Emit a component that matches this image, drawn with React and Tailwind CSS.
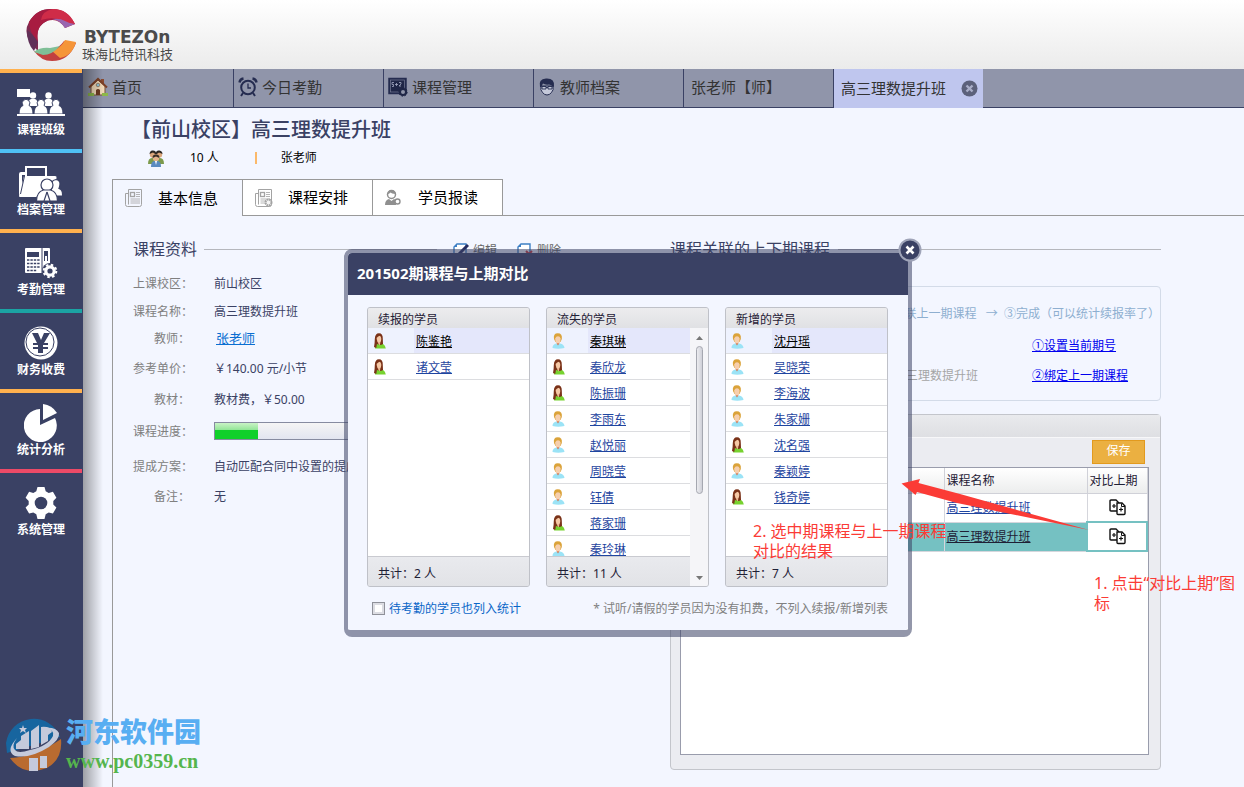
import clsx from 'clsx'

function ClassIcon() {
  return (
    <svg width="48" height="28" viewBox="0 0 48 28" fill="#fff">
      <rect x="0" y="0" width="13" height="8" />
      <circle cx="16" cy="6.5" r="3.2" />
      <path d="M11 17q0-6 3-7h4q3 1 3 7z" />
      <circle cx="31.500" cy="6.500" r="3.200" />
      <path d="M26.500 17q0-6 3-7h4q3 1 3 7z" />
      <g stroke="#3a4164" strokeWidth="1">
        <path d="M2 25q0-7 4-8.500a3.800 3.800 0 1 1 6 0q4 1.500 4 8.500z" />
        <path d="M17 25q0-7 4-8.500a3.800 3.800 0 1 1 6 0q4 1.500 4 8.500z" />
        <path d="M32 25q0-7 4-8.500a3.800 3.800 0 1 1 6 0q4 1.500 4 8.500z" />
      </g>
      <rect x="0" y="25" width="48" height="2" />
    </svg>
  )
}

function FilesIcon() {
  return (
    <svg width="44" height="36" viewBox="0 0 44 36" fill="#fff">
      <path d="M7 13V2h20v10" fill="none" stroke="#fff" strokeWidth="2" />
      <path d="M0 31V9q0-2 2-2h4v3H3v13z" />
      <path d="M5 11h31q2 0 1.500 2L34 32H1q-1 0-1-1z" />
      <path d="M1.500 29L5.500 11" stroke="#3a4164" strokeWidth="1" />
      <g stroke="#3a4164" strokeWidth="1.200">
        <path d="M32 24q-1-9 5-9.500q6 .5 3 9q4 1 3.500 7.500H34z" />
        <circle cx="28" cy="20" r="6" />
        <path d="M17.500 36q0-9 7-11h7q7 2 7 11z" />
        <path d="M28 27l-3 9M28 27l3 9" />
      </g>
    </svg>
  )
}

function DeviceIcon() {
  return (
    <svg width="34" height="32" viewBox="0 0 34 32">
      <rect x="1" y="1" width="25" height="25" rx="1" fill="#fff" />
      <path d="M3 5h12v5H3z" fill="#3a4164" />
      <path d="M3 13h13M3 16.500h13M3 20h13M3 23.500h10" stroke="#3a4164" strokeWidth="1.600" strokeDasharray="2.400 1" />
      <path d="M18 1v25" stroke="#3a4164" />
      <path d="M20 4h4v10h-4z" fill="#3a4164" />
      <path d="M21 9h2v6h-2z" fill="#fff" />
      <circle cx="26" cy="24" r="8" fill="#3a4164" />
      <circle cx="26" cy="24" r="4.200" fill="none" stroke="#fff" strokeWidth="3.200" />
      <circle cx="26" cy="24" r="6.300" fill="none" stroke="#fff" strokeWidth="2" strokeDasharray="2.500 2.450" />
    </svg>
  )
}

function MoneyIcon() {
  return (
    <svg width="36" height="36" viewBox="0 0 36 36">
      <circle cx="18" cy="18" r="16.500" fill="#fff" />
      <circle cx="17" cy="17" r="14" fill="none" stroke="#3a4164" />
      <path d="M9 8h6l3 7 3-7h6l-6 10h4v2h-5v2h5v2h-5v4h-5v-4h-5v-2h5v-2h-5v-2h4z" fill="#3a4164" />
    </svg>
  )
}

function PieIcon() {
  return (
    <svg width="34" height="38" viewBox="0 0 34 38" fill="#fff">
      <path d="M16 5v16l15-7a16.500 16.500 0 1 1-15-9z" />
      <path d="M19 0q9 1 14 9L19 16z" />
    </svg>
  )
}

function CogIcon() {
  return (
    <svg width="32" height="34" viewBox="0 0 32 34">
      <path
        d="M12.500 1h7l1.200 4.200 3 1.700 4.200-1.100 3.500 6-3.100 3.100v3.600l3.100 3.100-3.500 6-4.200-1.100-3 1.700L19.500 33h-7l-1.200-4.800-3-1.700-4.200 1.100-3.500-6 3.100-3.100v-3.600L.600 11.800l3.500-6 4.200 1.100 3-1.700z"
        fill="#fff"
      />
      <circle cx="16" cy="17" r="6.300" fill="#3a4164" />
    </svg>
  )
}

function HouseIcon() {
  return (
    <svg width="20" height="20" viewBox="0 0 20 20">
      <path d="M13 2h3v5h-3z" fill="#8a4a2f" />
      <path d="M3 9l7-6 7 6v9H3z" fill="#f0d9b8" stroke="#7a5236" />
      <path d="M1 10.500L10 2l9 8.500" fill="none" stroke="#7b4128" strokeWidth="2" />
      <circle cx="10" cy="8" r="1.800" fill="#8fc3d6" stroke="#7a5236" strokeWidth=".6" />
      <path d="M8 18v-5q2-2 4 0v5z" fill="#6d3a22" />
      <path d="M0 16h6v3H0zM14 16h6v3h-6z" fill="#8cb84a" />
    </svg>
  )
}

function ClockIcon() {
  return (
    <svg width="20" height="20" viewBox="0 0 20 20" fill="none" stroke="#252c50" strokeWidth="1.600">
      <circle cx="10" cy="10.500" r="6.800" strokeWidth="2" />
      <path d="M10 6.500v4.500h3" strokeWidth="1.300" />
      <path d="M1.500 5.500Q2 2 5.500 1.500M14.500 1.500Q18 2 18.500 5.500" strokeWidth="2.400" />
      <path d="M5 16l-2 3M15 16l2 3" strokeWidth="2" />
    </svg>
  )
}

function BoardIcon() {
  return (
    <svg width="20" height="20" viewBox="0 0 20 20">
      <rect x="1" y="1.500" width="17" height="15" fill="#1f2647" stroke="#252c50" strokeWidth="1.500" />
      <rect x="2.500" y="3" width="14" height="12" fill="none" stroke="#777d98" strokeWidth=".7" />
      <path d="M6 5.500H4v2h1.500v2H4M7 7.500h3M8.500 6v3M11 5.500h2v1.500l-2 2h2" stroke="#a5abc4" strokeWidth=".8" fill="none" />
      <circle cx="15" cy="15" r="3" fill="#9095aa" stroke="#1f2647" strokeWidth="2" />
      <circle cx="15" cy="15" r="4.200" fill="none" stroke="#1f2647" strokeDasharray="1.600 1.600" />
    </svg>
  )
}

function TeacherIcon() {
  return (
    <svg width="18" height="18" viewBox="-1 0 18 18">
      <path d="M2 8q-1 4 1.500 6.500 2 2.500 4.500 2.500t4.500-2.500Q15 12 14 8z" fill="#c5c9da" stroke="#252c50" />
      <path d="M1 9Q-1 1 7 .5q9-.5 8 8L13.800 9Q13 6.500 10 6.500 6 7 4 5.500 3 7 2.300 9z" fill="#252c50" />
      <path d="M3 8.500h4v2.500H3zM9 8.500h4v2.500H9zM7 9.500h2" fill="none" stroke="#252c50" strokeWidth=".9" />
    </svg>
  )
}

function GroupIcon() {
  return (
    <svg width="16" height="17" viewBox="0 0 16 17">
      <path d="M0 14q0-6 4-6h8q4 0 4 6z" fill="#7c9a4c" />
      <circle cx="5" cy="4.500" r="3.200" fill="#dca77c" />
      <circle cx="11" cy="4.500" r="3.200" fill="#dca77c" />
      <path d="M1.500 4Q2 0 5 .500q3 0 3 2.500 0-3 3.500-2.500Q14.500 1 14.500 4L11 2.500 8 4.500 5 2.500z" fill="#2c2723" />
      <circle cx="8" cy="8" r="3.200" fill="#e5b48c" />
      <path d="M4.700 8Q4 4.500 8 4.500T11.300 8L8 6.500z" fill="#3a2f28" />
      <path d="M3 17q0-6 3.500-6h3Q13 11 13 17z" fill="#5b8bc0" />
      <path d="M7 11h2l-1 4z" fill="#fff" />
    </svg>
  )
}

function NewsIcon({ gear }) {
  return (
    <svg width="18" height="18" viewBox="0 0 18 18" fill="none" stroke="#a3a3a3">
      <path d="M3.500.500h13v15q0 2-2 2h-12q-2 0-2-2v-11h3" />
      <path d="M3.500.500v15" />
      <rect x="5.500" y="3.500" width="4" height="4" strokeWidth="1.300" />
      <path d="M11 3.500h4M11 5.500h4M11 7.500h4M5.500 10h9.500M5.500 12h9.500M5.500 14h9.500" strokeWidth=".8" />
      {gear && <circle cx="13.500" cy="13.500" r="3" fill="#f5f5f5" strokeWidth="2" strokeDasharray="1.800 .6" />}
    </svg>
  )
}

function PersonIcon() {
  return (
    <svg width="16" height="17" viewBox="0 0 16 17">
      <circle cx="6.500" cy="5.500" r="4" fill="#fff" stroke="#8f8f8f" strokeWidth="1.500" />
      <path d="M2.500 5Q4 .5 7 1q4 .5 3.500 4-4-.5-5-1.500Q4 5 2.500 5z" fill="#8f8f8f" />
      <path d="M0 16q0-5 4-6l2.500 2L9 10q2 .5 2 6z" fill="#8f8f8f" />
      <circle cx="12.500" cy="12.500" r="2.500" fill="#fff" stroke="#8f8f8f" strokeWidth="1.400" />
    </svg>
  )
}

function BoyIcon() {
  return (
    <svg width="13" height="16" viewBox="0 0 13 16">
      <path d="M.5 15Q.5 11 4.500 10.500h3.500q4 .5 4.500 4.500Q6 16.500 .5 15z" fill="#9be3f6" />
      <path d="M4.300 9.500h3.400L6 12.500z" fill="#d9683f" />
      <path d="M2 6Q1 .2 5.800.2T9.800 6L8.500 9h-5z" fill="#dba33a" />
      <path d="M3.200 5.500Q4 3.200 6 3.200T8.600 5.500Q8.700 10.500 6 10.500T3.200 5.500z" fill="#f6cfae" />
    </svg>
  )
}

function GirlIcon() {
  return (
    <svg width="13" height="16" viewBox="0 0 13 16">
      <path d="M2 15.500Q2.500 11 5 10.500h4q3 1 3.800 5z" fill="#77d22f" />
      <path d="M1 14Q1.800 10 1.800 6 2 .3 6 .3T9.800 6l.2 5-2 1-4-1-.8 4z" fill="#7a3218" />
      <path d="M3.600 5Q5 3 7 2.800 8.300 4 8.300 6 8 10 6 10T3.600 5z" fill="#f6c9a6" />
      <path d="M4.800 9.500h2.700l-1 3z" fill="#f1bb93" />
    </svg>
  )
}

function CompareIcon() {
  return (
    <svg width="17" height="17" viewBox="0 0 17 17" fill="#fff" stroke="#111" strokeWidth="1.400">
      <path d="M2 1h5l2.500 2.500V12H2q-1 0-1-1V2q0-1 1-1z" />
      <path d="M8 4h5l3 3v7.500q0 1-1 1H9q-1 0-1-1z" />
      <path d="M12.500 4.500v3H16" fill="none" strokeWidth="1" />
      <path d="M3 7h4M5 5v4M10 10.500h4M12 8.500v4" strokeWidth="1.200" />
    </svg>
  )
}

function DocIcon({ remove }) {
  return (
    <svg width="16" height="16" viewBox="0 0 16 16" fill="none">
      <path d="M4 1h9v13H1V4z" fill="#fff" stroke="#3d7fc4" strokeWidth="1.400" />
      <path d="M1 4h3V1z" fill="#3d7fc4" />
      {remove ? (
        <path d="M9 8l6 6M15 8l-6 6" stroke="#c33" strokeWidth="2" />
      ) : (
        <path d="M15 2L6 11" stroke="#252c60" strokeWidth="3" />
      )}
    </svg>
  )
}

const menu = [
  { label: '课程班级', icon: ClassIcon, line: 'border-[#ffb14e]' },
  { label: '档案管理', icon: FilesIcon, line: 'border-[#4fc1f5]' },
  { label: '考勤管理', icon: DeviceIcon, line: 'border-[#ffb14e]' },
  { label: '财务收费', icon: MoneyIcon, line: 'border-[#1ba3a3]' },
  { label: '统计分析', icon: PieIcon, line: 'border-[#ffb14e]' },
  { label: '系统管理', icon: CogIcon, line: 'border-[#ec4a67]' },
]

const navTabs = [
  { label: '首页', icon: HouseIcon },
  { label: '今日考勤', icon: ClockIcon },
  { label: '课程管理', icon: BoardIcon },
  { label: '教师档案', icon: TeacherIcon },
  { label: '张老师【师】' },
]

const groups = [
  {
    title: '续报的学员',
    total: '2',
    students: [
      { name: '陈鉴艳', girl: true },
      { name: '诸文莹', girl: true },
    ],
  },
  {
    title: '流失的学员',
    total: '11',
    scroll: true,
    students: [
      { name: '秦琪琳' },
      { name: '秦欣龙', girl: true },
      { name: '陈振珊', girl: true },
      { name: '李雨东' },
      { name: '赵悦丽' },
      { name: '周晓莹' },
      { name: '钰倩' },
      { name: '蒋家珊', girl: true },
      { name: '秦玲琳' },
    ],
  },
  {
    title: '新增的学员',
    total: '7',
    students: [
      { name: '沈丹瑶' },
      { name: '吴晓荣' },
      { name: '李海波' },
      { name: '朱家姗' },
      { name: '沈名强', girl: true },
      { name: '秦颖婷' },
      { name: '钱奇婷', girl: true },
    ],
  },
]

function Header() {
  return (
    <header className="flex h-[69px] items-start bg-gradient-to-b from-white to-[#ebebeb] pl-[25px] pt-2">
      <svg width="52" height="54" viewBox="0 0 52 54">
        <path d="M13 43Q-4 28 4 14 12 0 28 1L22 13Q10 18 13 34z" fill="#7e2a50" />
        <path d="M4 14Q12 0 28 1q14 0 22 15L40 20Q33 9 22 13 10 18 13 34 4 24 4 14z" fill="#a81c41" />
        <path d="M28 1q15 0 22 15l-8 1Q34 7 16 12 17 3 28 1z" fill="#cf2c48" />
        <path d="M27 11q8-1 13 2 5 3 10 3l-10 4Q35 12 27 11z" fill="#9866b0" />
        <path d="M2 22Q2 36 9 43l4-9Q7 25 2 22z" fill="#5f3057" />
        <path d="M9 43q11 2 18-1 7-2 12-9l12 2Q44 53 27 53 16 53 9 43z" fill="#c2403f" />
        <path d="M27 43q9-3 13-11l11 2Q47 48 35 50z" fill="#f59538" />
        <path d="M9 44q6-5 16-4l10-2q-8 9-17 9z" fill="#7fbf96" />
      </svg>
      <div className="ml-[5px] mt-[20px] text-[#4b4b4b]">
        <div className="px-[2px] font-['DejaVu_Sans'] text-[17px] leading-[18px] font-bold">BYTEZOn</div>
        <div className="text-[13px] leading-4">珠海比特讯科技</div>
      </div>
    </header>
  )
}

function Sidebar() {
  return (
    <aside className="relative w-[83px] shrink-0 bg-[#3a4164]">
      <nav className="pr-[2px]">
        {menu.map(({ label, icon: Icon, line }) => (
          <a key={label} href="#" className={clsx('-mr-px flex h-20 flex-col items-center border-t-4 pt-3', line)}>
            <span className="flex h-9 items-center justify-center">
              <Icon />
            </span>
            <span className="text-xs leading-[18px] font-bold text-white">{label}</span>
          </a>
        ))}
      </nav>
      <div className="absolute inset-y-0 left-full w-5 bg-gradient-to-r from-black/35 to-transparent" />
    </aside>
  )
}

function NavTabs() {
  return (
    <nav className="flex h-[39px] border-b border-[#3a4164] bg-[#9095aa] text-[15px] text-[#333]">
      {navTabs.map(({ label, icon: Icon }) => (
        <a
          key={label}
          href="#"
          className={clsx('-mr-px flex w-[151px] items-center gap-1 border-r border-[#3a4164] pr-1 pb-[2px]', Icon ? 'pl-[5px]' : 'pl-2')}
        >
          {Icon && <Icon />}
          <span>{label}</span>
        </a>
      ))}
      <div className="-mb-px flex w-[150px] items-center justify-between border-l border-[#3a4164] bg-[#bfc6ee] pr-[5px] pl-[7px]">
        <span>高三理数提升班</span>
        <button aria-label="关闭标签" className="rounded-full">
          <svg width="17" height="17" viewBox="0 0 17 17">
            <circle cx="8.500" cy="8.500" r="8" fill="#5c617b" />
            <path d="M5.500 5.500l6 6M11.500 5.500l-6 6" stroke="#a9aec8" strokeWidth="2.400" />
          </svg>
        </button>
      </div>
    </nav>
  )
}

function InfoRow({ label, height, children }) {
  return (
    <div className={clsx('flex items-center', height)}>
      <dt className="w-[57px] text-right whitespace-nowrap text-[#808080]">{label}：</dt>
      <dd className="ml-6 whitespace-nowrap">{children}</dd>
    </div>
  )
}

function CourseInfo() {
  return (
    <section className="pl-5">
      <div className="flex h-5 items-center">
        <h2 className="text-base text-[#3a4164]">课程资料</h2>
        <div className="ml-[7px] w-[233px] border-t border-[#b5b7bd]" />
        <a href="#" className="ml-4 flex items-center gap-1 pt-1 text-xs text-[#666]">
          <DocIcon />
          编辑
        </a>
        <a href="#" className="ml-5 flex items-center gap-1 pt-1 text-xs text-[#666]">
          <DocIcon remove />
          删除
        </a>
      </div>
      <dl className="mt-[11px] text-xs text-[#3a4164]">
        <InfoRow label="上课校区" height="h-7">前山校区</InfoRow>
        <InfoRow label="课程名称" height="h-[27px]">高三理数提升班</InfoRow>
        <InfoRow label="教师" height="h-7">
          <a href="#" className="ml-[2px] text-[13px] text-[#0a6ed1] underline">张老师</a>
        </InfoRow>
        <InfoRow label="参考单价" height="h-8">￥140.00 元/小节</InfoRow>
        <InfoRow label="教材" height="h-[30px]">教材费，￥50.00</InfoRow>
        <InfoRow label="课程进度" height="h-[34px]">
          <div className="mb-[2px] h-[18px] w-[150px] border border-[#868ba0] bg-gradient-to-b from-[#f5f5f5] to-[#e2e5f0]">
            <div className="h-full w-[29%] bg-linear-to-b from-[#c9f3c6] from-0% via-[#8fe595] via-45% to-[#10d02a] to-46%" />
          </div>
        </InfoRow>
        <InfoRow label="提成方案" height="h-9">自动匹配合同中设置的提成方案</InfoRow>
        <InfoRow label="备注" height="h-6">无</InfoRow>
      </dl>
    </section>
  )
}

function LinkedCourses() {
  return (
    <section className="text-xs">
      <div className="flex h-5 items-center">
        <h2 className="text-base text-[#3a4164]">课程关联的上下期课程</h2>
        <div className="ml-2 flex-1 border-t border-[#b5b7bd]" />
      </div>

      <div className="mt-[27px] h-[115px] rounded border border-[#d3dbe8] pt-[19px]">
        <p className="text-right leading-4 whitespace-nowrap text-[#8eafd0]">
          ②关联上一期课程 &nbsp; → &nbsp;③完成（可以统计续报率了）
        </p>
        <div className="mt-4 grid grid-cols-[1fr_128px] gap-y-[14px] leading-4">
          <span />
          <a href="#" className="text-[#0000ee] underline">①设置当前期号</a>
          <span className="pr-[54px] text-right text-[#a5a5a5]">高三理数提升班</span>
          <a href="#" className="text-[#0000ee] underline">②绑定上一期课程</a>
        </div>
      </div>

      <div className="mt-[13px] flex h-[356px] flex-col rounded-sm border border-[#c3c5cb] bg-[#ebecf1] pr-[11px] pb-[14px] pl-[9px]">
        <div className="-mr-[11px] -ml-[9px] h-[23px] border-b border-[#f7f7f9] bg-gradient-to-b from-[#e9eaed] to-[#dedfe3]" />
        <div className="flex h-[29px] items-start justify-end pt-[2px] pr-[4px]">
          <button className="h-6 w-[53px] border border-[#e29a1e] bg-[#ebb041] pb-[2px] leading-5 text-white">保存</button>
        </div>
        <div className="flex-1 border border-[#999cac] bg-white">
          <table className="w-full table-fixed border-collapse text-left text-[#1f2035]">
            <thead>
              <tr className="h-[25px] bg-gradient-to-b from-white to-[#eceded]">
                <th className="border-b border-[#d5d6dc]" />
                <th className="w-[143px] border border-t-0 border-[#d0d1d8] px-[2px] pt-[2px] font-normal">课程名称</th>
                <th className="w-[60px] border border-t-0 border-[#d0d1d8] px-[2px] pt-[2px] font-normal">对比上期</th>
              </tr>
            </thead>
            <tbody>
              <tr className="h-[29px]">
                <td className="border-b border-[#d5d6dc]" />
                <td className="border border-[#d5d6dc] px-[2px]">
                  <a href="#" className="text-[#1f45a0] underline">高三理数提升班</a>
                </td>
                <td className="border border-[#d5d6dc]">
                  <button aria-label="对比上期" className="mx-auto block">
                    <CompareIcon />
                  </button>
                </td>
              </tr>
              <tr className="h-[29px] bg-[#75c1c2]">
                <td className="border-b border-[#d5d6dc]" />
                <td className="border border-[#d5d6dc] px-[2px]">
                  <a href="#" className="underline">高三理数提升班</a>
                </td>
                <td className="border-2 border-[#75c1c2] bg-white">
                  <button aria-label="对比上期" className="mx-auto block">
                    <CompareIcon />
                  </button>
                </td>
              </tr>
            </tbody>
          </table>
        </div>
      </div>
    </section>
  )
}

function StudentCard({ title, total, students, scroll }) {
  return (
    <div className="flex h-[280px] flex-col overflow-hidden rounded-[3px] border border-[#bfc1c8] bg-[#e4e5ea] text-xs">
      <h3 className="h-5 bg-gradient-to-b from-[#ececee] to-[#e0e1e4] pl-[10px] leading-6 text-[#1f2035]">{title}</h3>
      <div className="flex min-h-0 flex-1">
        <div className="flex min-w-0 flex-1 flex-col">
          <ul className="min-h-0 flex-1 overflow-hidden bg-white">
            {students.map((student, index) => (
              <li key={student.name} className="flex h-[26px] border-b border-[#dcdde0]">
                <span className={clsx('pt-[5px] pl-[5px]', scroll ? 'w-[41px]' : 'w-[46px]', index === 0 && 'bg-[#eef2fe]')}>
                  {student.girl ? <GirlIcon /> : <BoyIcon />}
                </span>
                <span className={clsx('flex-1 pl-[2px] leading-7', index === 0 && 'bg-[#e4e7fb]')}>
                  <a href="#" className={clsx('underline', index === 0 ? 'text-black' : 'text-[#1f45a0]')}>{student.name}</a>
                </span>
              </li>
            ))}
          </ul>
          <p className="h-[30px] border-t border-[#c9cad0] bg-gradient-to-b from-[#e9eaee] to-[#e2e3e7] pl-[10px] leading-[34px] text-[#1f2035]">
            共计：{total} 人
          </p>
        </div>
        {scroll && (
          <div className="flex w-[18px] flex-col items-center justify-between bg-[#f5f5f8] pt-2 pb-[6px]">
            <div className="flex flex-col items-center gap-[6px]">
              <svg width="7" height="4"><path d="M0 4l3.500-4L7 4z" fill="#777" /></svg>
              <div className="h-[148px] w-[7px] rounded-full border border-[#a5a7b0] bg-gradient-to-r from-[#ececf0] to-[#cfd0d8]" />
            </div>
            <svg width="7" height="4"><path d="M0 0l3.500 4L7 0z" fill="#777" /></svg>
          </div>
        )}
      </div>
    </div>
  )
}

function CompareDialog() {
  return (
    <div role="dialog" aria-label="201502期课程与上期对比" className="absolute top-[249px] left-[344px] w-[568px] rounded-lg border-4 border-b-[7px] border-[#3a4164]/55 bg-clip-padding">
      <div className="overflow-hidden rounded bg-[#f3f6ff]">
        <h2 className="h-[42px] bg-[#3a4164] pl-[9px] text-[15px] leading-10 font-bold text-white">201502期课程与上期对比</h2>
        <div className="px-5 pt-3 pl-[19px]">
          <div className="grid grid-cols-3 gap-4">
            {groups.map((group) => (
              <StudentCard key={group.title} {...group} />
            ))}
          </div>
          <div className="flex h-[43px] items-center justify-between pl-[5px] text-xs">
            <label className="flex items-center gap-1 text-[#0a66c8]">
              <input type="checkbox" className="h-[13px] w-[13px] appearance-none border border-[#8f9199] bg-white shadow-[inset_0_0_0_2px_#dcdde3]" />
              待考勤的学员也列入统计
            </label>
            <span className="text-[#808080]">* 试听/请假的学员因为没有扣费，不列入续报/新增列表</span>
          </div>
        </div>
      </div>
      <button aria-label="关闭" className="absolute -top-[15px] -right-[14px] rounded-full">
        <svg width="24" height="24" viewBox="0 0 24 24">
          <circle cx="12" cy="12" r="10.500" fill="#3a4164" stroke="#9fa4b8" strokeWidth="2" />
          <path d="M8.500 8.500l7 7M15.500 8.500l-7 7" stroke="#fff" strokeWidth="2.600" />
        </svg>
      </button>
    </div>
  )
}

function Notes() {
  return (
    <>
      <svg className="absolute top-[476px] left-[900px]" width="190" height="56" viewBox="0 0 190 56">
        <path d="M1.500 7.500L20 3l-1.500 4L60 18l129 36-132-27-40-11-1.500 3z" fill="#fb3b36" />
      </svg>
      <p className="absolute top-[521px] left-[753px] text-base leading-5 whitespace-nowrap text-[#fb3b36]">
        2. 选中期课程与上一期课程
        <br />
        对比的结果
      </p>
      <p className="absolute top-[573px] left-[1094px] text-base leading-5 whitespace-nowrap text-[#fb3b36]">
        1. 点击“对比上期”图
        <br />标
      </p>
    </>
  )
}

function Watermark() {
  return (
    <div className="absolute top-[715px] left-[5px] flex items-center gap-1">
      <svg width="57" height="57" viewBox="0 0 57 57">
        <path d="M1 28a28 28 0 0 1 54-6L2 38z" fill="#17659f" />
        <path d="M5 43Q30 42 56 24 58 44 42 53q-24 9-37-10z" fill="#b96b30" />
        <path d="M12 23Q0 36 10 41q15 3 34-9 11-8 10-14-3-6-14-5 10 2 8 8-5 10-23 14-12 4-15 0-4-4 2-12z" fill="#c5cadb" />
        <path d="M11 34V29l5-4v-4l8-5v18zM26 34V16l8-6v22zM36 30V12q10-1 11 5l-4 3v6z" fill="#c5cadb" />
        <path d="M24 43h9v13h-9zM35 41h7v12h-7z" fill="#c5cadb" />
        <path d="M18 10l1 3h3l-2 2 1 3-3-2-3 2 1-3-2-2h3z" fill="#c5cadb" />
      </svg>
      <div>
        <div className="text-[27px] leading-[30px] font-black text-[#58aef2]">河东软件园</div>
        <div className="mt-1 font-['Liberation_Serif'] text-xl leading-5 font-bold text-[#55b54d]">www.pc0359.cn</div>
      </div>
    </div>
  )
}

function App() {
  return (
    <div className="relative flex min-h-screen flex-col overflow-hidden bg-[#f3f6ff] font-['Noto_Sans','Noto_Sans_CJK_SC',sans-serif]">
      <Header />
      <div className="flex flex-1">
        <Sidebar />
        <div className="flex min-w-0 flex-1 flex-col">
          <NavTabs />
          <div className="h-[71px] pt-[10px] pl-12">
            <h1 className="text-xl leading-6 font-medium text-[#3a4164]">【前山校区】高三理数提升班</h1>
            <div className="mt-2 flex h-4 items-center pl-[17px] text-xs text-black">
              <GroupIcon />
              <span className="ml-[26px]">10 人</span>
              <span className="ml-9 h-3 w-[2px] bg-[#fbb96a]" />
              <span className="ml-6">张老师</span>
            </div>
          </div>

          <div className="ml-[29px] flex flex-1 flex-col">
            <div className="flex text-[15px] text-black">
              <button className="flex h-[37px] w-[131px] items-center gap-[15px] border border-b-0 border-[#999] pl-3">
                <NewsIcon />
                基本信息
              </button>
              <button className="-ml-px flex h-[37px] w-[131px] items-center gap-[15px] border border-[#999] bg-white pl-3">
                <NewsIcon gear />
                课程安排
              </button>
              <button className="-ml-px flex h-[37px] w-[131px] items-center gap-[17px] border border-[#999] bg-white pl-3">
                <PersonIcon />
                学员报读
              </button>
              <div className="flex-1 border-b border-[#999]" />
            </div>
            <div className="grid flex-1 grid-cols-[557px_1fr] border-l border-[#999] pt-[23px] pr-[83px] pb-4">
              <CourseInfo />
              <LinkedCourses />
            </div>
          </div>
        </div>
      </div>
      <CompareDialog />
      <Notes />
      <Watermark />
    </div>
  )
}

export default App
